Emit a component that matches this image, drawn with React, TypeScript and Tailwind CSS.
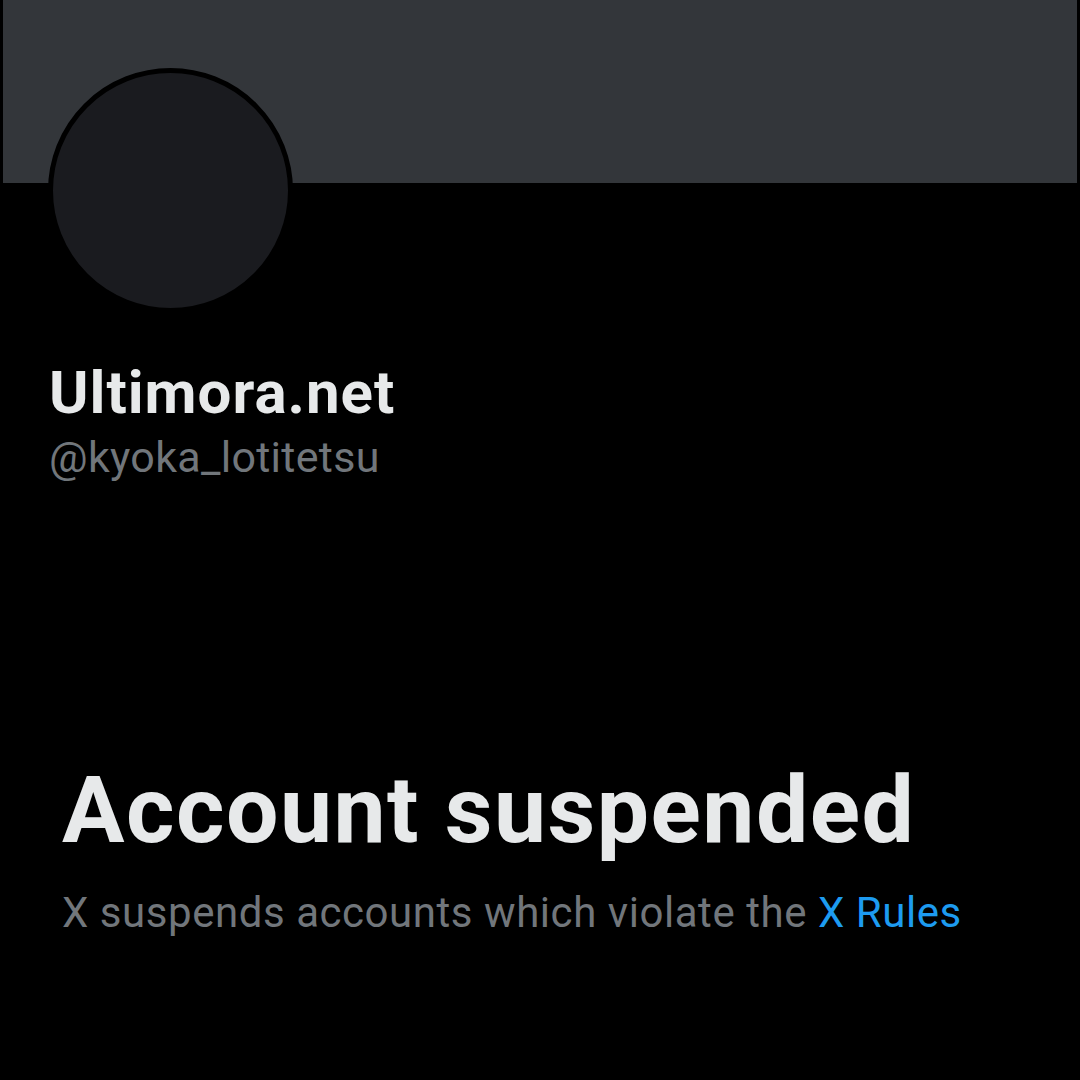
export default function App() {
  return (
    <div className="w-[1080px] h-[1080px] bg-black overflow-hidden" style={{ fontFamily: "Roboto, 'Liberation Sans', sans-serif" }}>
      <div className="ml-[3px] mr-[3px] h-[183px] bg-[#33363a]" />
      <div className="relative h-0">
        <div className="absolute left-[48px] top-[-115px] w-[245px] h-[245px] rounded-full bg-[#1a1b1f] border-[5px] border-black" />
      </div>
      <div className="pl-[49px] pt-[178px]">
        <div className="text-[60px] leading-[64px] font-bold text-[#e7e9ea] tracking-[1px]">Ultimora.net</div>
        <div className="text-[43px] leading-[48px] text-[#71767b] mt-[8px] tracking-[0.3px]">@kyoka_lotitetsu</div>
      </div>
      <div className="pl-[62px] pt-[280px]">
        <div className="text-[93px] leading-[100px] font-bold text-[#e7e9ea] tracking-[1.5px]">Account suspended</div>
        <div className="text-[42px] leading-[48px] text-[#71767b] mt-[28px] tracking-[0.55px]">
          X suspends accounts which violate the <span className="text-[#1d9bf0]">X Rules</span>
        </div>
      </div>
    </div>
  );
}
